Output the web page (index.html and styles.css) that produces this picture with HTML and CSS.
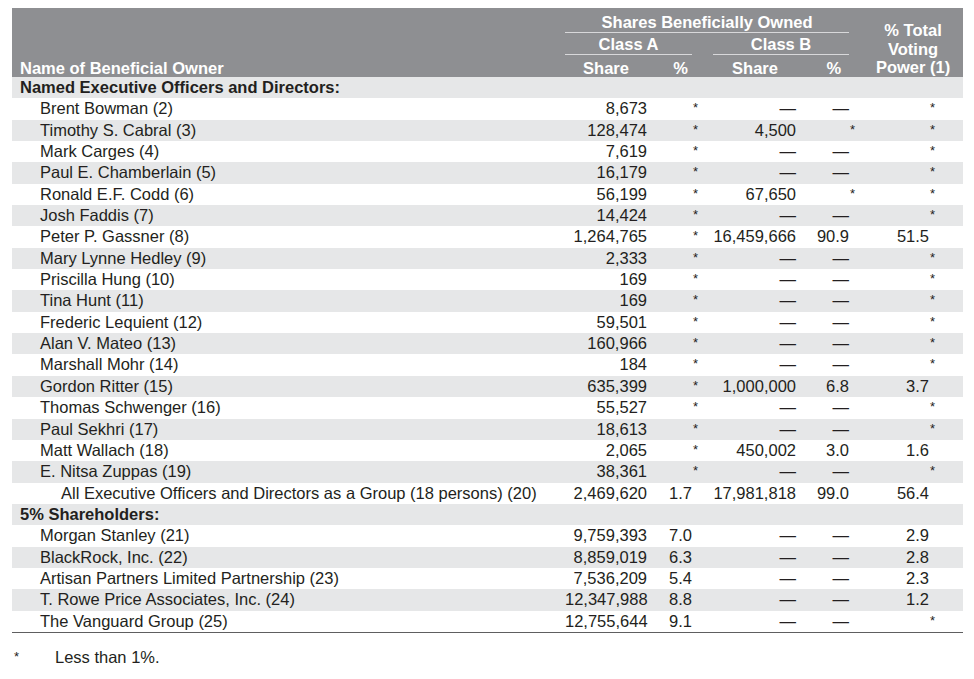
FILE: index.html
```html
<!DOCTYPE html>
<html lang="en">
<head>
<meta charset="utf-8">
<title>Beneficial Ownership</title>
<link rel="stylesheet" href="styles.css">
</head>
<body>
<div class="page">
<table class="own">
<colgroup><col class="c-name"><col class="c-as"><col class="c-ap"><col class="c-bs"><col class="c-bp"><col class="c-t"></colgroup>
<thead>
<tr class="h1"><th rowspan="3" class="h-name">Name of Beneficial Owner</th><th colspan="4" class="h-grp"><div class="rule rule-all">Shares Beneficially Owned</div></th><th rowspan="3" class="h-total">% Total<br>Voting<br>Power (1)</th></tr>
<tr class="h2"><th colspan="2" class="h-grp"><div class="rule rule-a">Class A</div></th><th colspan="2" class="h-grp"><div class="rule rule-b">Class B</div></th></tr>
<tr class="h3"><th class="h-as">Share</th><th class="h-ap">%</th><th class="h-bs">Share</th><th class="h-bp">%</th></tr>
</thead>
<tbody>
<tr><td class="nm sec">Named Executive Officers and Directors:</td><td class="as"></td><td class="ap"></td><td class="bs"></td><td class="bp"></td><td class="t"></td></tr>
<tr><td class="nm">Brent Bowman (2)</td><td class="as">8,673</td><td class="ap"><span class="st">*</span></td><td class="bs">—</td><td class="bp">—</td><td class="t"><span class="st">*</span></td></tr>
<tr><td class="nm">Timothy S. Cabral (3)</td><td class="as">128,474</td><td class="ap"><span class="st">*</span></td><td class="bs">4,500</td><td class="bp"><span class="st">*</span></td><td class="t"><span class="st">*</span></td></tr>
<tr><td class="nm">Mark Carges (4)</td><td class="as">7,619</td><td class="ap"><span class="st">*</span></td><td class="bs">—</td><td class="bp">—</td><td class="t"><span class="st">*</span></td></tr>
<tr><td class="nm">Paul E. Chamberlain (5)</td><td class="as">16,179</td><td class="ap"><span class="st">*</span></td><td class="bs">—</td><td class="bp">—</td><td class="t"><span class="st">*</span></td></tr>
<tr><td class="nm">Ronald E.F. Codd (6)</td><td class="as">56,199</td><td class="ap"><span class="st">*</span></td><td class="bs">67,650</td><td class="bp"><span class="st">*</span></td><td class="t"><span class="st">*</span></td></tr>
<tr><td class="nm">Josh Faddis (7)</td><td class="as">14,424</td><td class="ap"><span class="st">*</span></td><td class="bs">—</td><td class="bp">—</td><td class="t"><span class="st">*</span></td></tr>
<tr><td class="nm">Peter P. Gassner (8)</td><td class="as">1,264,765</td><td class="ap"><span class="st">*</span></td><td class="bs">16,459,666</td><td class="bp">90.9</td><td class="t">51.5</td></tr>
<tr><td class="nm">Mary Lynne Hedley (9)</td><td class="as">2,333</td><td class="ap"><span class="st">*</span></td><td class="bs">—</td><td class="bp">—</td><td class="t"><span class="st">*</span></td></tr>
<tr><td class="nm">Priscilla Hung (10)</td><td class="as">169</td><td class="ap"><span class="st">*</span></td><td class="bs">—</td><td class="bp">—</td><td class="t"><span class="st">*</span></td></tr>
<tr><td class="nm">Tina Hunt (11)</td><td class="as">169</td><td class="ap"><span class="st">*</span></td><td class="bs">—</td><td class="bp">—</td><td class="t"><span class="st">*</span></td></tr>
<tr><td class="nm">Frederic Lequient (12)</td><td class="as">59,501</td><td class="ap"><span class="st">*</span></td><td class="bs">—</td><td class="bp">—</td><td class="t"><span class="st">*</span></td></tr>
<tr><td class="nm">Alan V. Mateo (13)</td><td class="as">160,966</td><td class="ap"><span class="st">*</span></td><td class="bs">—</td><td class="bp">—</td><td class="t"><span class="st">*</span></td></tr>
<tr><td class="nm">Marshall Mohr (14)</td><td class="as">184</td><td class="ap"><span class="st">*</span></td><td class="bs">—</td><td class="bp">—</td><td class="t"><span class="st">*</span></td></tr>
<tr><td class="nm">Gordon Ritter (15)</td><td class="as">635,399</td><td class="ap"><span class="st">*</span></td><td class="bs">1,000,000</td><td class="bp">6.8</td><td class="t">3.7</td></tr>
<tr><td class="nm">Thomas Schwenger (16)</td><td class="as">55,527</td><td class="ap"><span class="st">*</span></td><td class="bs">—</td><td class="bp">—</td><td class="t"><span class="st">*</span></td></tr>
<tr><td class="nm">Paul Sekhri (17)</td><td class="as">18,613</td><td class="ap"><span class="st">*</span></td><td class="bs">—</td><td class="bp">—</td><td class="t"><span class="st">*</span></td></tr>
<tr><td class="nm">Matt Wallach (18)</td><td class="as">2,065</td><td class="ap"><span class="st">*</span></td><td class="bs">450,002</td><td class="bp">3.0</td><td class="t">1.6</td></tr>
<tr><td class="nm">E. Nitsa Zuppas (19)</td><td class="as">38,361</td><td class="ap"><span class="st">*</span></td><td class="bs">—</td><td class="bp">—</td><td class="t"><span class="st">*</span></td></tr>
<tr><td class="nm grp">All Executive Officers and Directors as a Group (18 persons) (20)</td><td class="as">2,469,620</td><td class="ap">1.7</td><td class="bs">17,981,818</td><td class="bp">99.0</td><td class="t">56.4</td></tr>
<tr><td class="nm sec">5% Shareholders:</td><td class="as"></td><td class="ap"></td><td class="bs"></td><td class="bp"></td><td class="t"></td></tr>
<tr><td class="nm">Morgan Stanley (21)</td><td class="as">9,759,393</td><td class="ap">7.0</td><td class="bs">—</td><td class="bp">—</td><td class="t">2.9</td></tr>
<tr><td class="nm">BlackRock, Inc. (22)</td><td class="as">8,859,019</td><td class="ap">6.3</td><td class="bs">—</td><td class="bp">—</td><td class="t">2.8</td></tr>
<tr><td class="nm">Artisan Partners Limited Partnership (23)</td><td class="as">7,536,209</td><td class="ap">5.4</td><td class="bs">—</td><td class="bp">—</td><td class="t">2.3</td></tr>
<tr><td class="nm">T. Rowe Price Associates, Inc. (24)</td><td class="as">12,347,988</td><td class="ap">8.8</td><td class="bs">—</td><td class="bp">—</td><td class="t">1.2</td></tr>
<tr><td class="nm">The Vanguard Group (25)</td><td class="as">12,755,644</td><td class="ap">9.1</td><td class="bs">—</td><td class="bp">—</td><td class="t"><span class="st">*</span></td></tr>
</tbody>
</table>
<div class="note"><span class="note-mark">*</span><span class="note-text">Less than 1%.</span></div>
</div>
</body>
</html>
```
FILE: styles.css
```css
html, body {
  margin: 0;
  padding: 0;
  background: #ffffff;
}
body {
  font-family: "Liberation Sans", Arial, sans-serif;
  font-size: 16.5px;
  color: #231f20;
}
.page {
  padding: 8px 11px 0 12px;
}
.own {
  width: 951px;
  table-layout: fixed;
  border-collapse: collapse;
  border-spacing: 0;
  border-bottom: 1.5px solid #5e5e60;
}
.c-name { width: 553px; }
.c-as { width: 87px; }
.c-ap { width: 48px; }
.c-bs { width: 100px; }
.c-bp { width: 53px; }
.c-t { width: 110px; }

.own thead {
  background: #8e8f92;
  color: #ffffff;
}
.own th {
  padding: 0;
  font-weight: bold;
  text-align: center;
  vertical-align: bottom;
  white-space: nowrap;
}
.h-name {
  text-align: left !important;
  padding-left: 8px !important;
  line-height: 18px;
}
.h-total {
  padding-left: 10px !important;
  line-height: 18.7px;
}
.h1 .h-grp {
  padding-top: 5px;
}
.h2 .h-grp {
  padding-top: 2px;
}
.rule {
  line-height: 19px;
  border-bottom: 1px solid #d8d8da;
}
.rule-all { margin-right: 4px; }
.rule-a { margin-right: 8px; }
.rule-b { margin-left: 13px; margin-right: 4px; }
.h3 th {
  padding-top: 4px;
  line-height: 18px;
}
.own .h-as { padding-right: 5px; }
.own .h-ap { text-align: right; padding-right: 12px; }
.own .h-bs { padding-left: 10px; }
.own .h-bp { text-align: right; padding-right: 12px; }

.own td {
  padding: 0;
  line-height: 21.35px;
  height: 21.35px;
  text-align: right;
  white-space: nowrap;
}
.own tbody tr:nth-child(odd) {
  background: #e6e7e8;
}
.own td.nm {
  text-align: left;
  padding-left: 28px;
}
.own td.sec {
  padding-left: 8px;
  font-weight: bold;
}
.own td.grp {
  padding-left: 49px;
}
.own td.as { padding-right: 5px; }
.own td.ap { padding-right: 8px; }
.own td.bs { padding-right: 4px; }
.own td.bp { padding-right: 4px; }
.own td.t { padding-right: 34px; }
.st {
  font-size: 13px;
  line-height: 10px;
  vertical-align: 2px;
  margin-right: -6px;
}
.note {
  display: flex;
  margin-top: 15px;
  line-height: 19px;
}
.note-mark {
  width: 41px;
  padding-left: 2px;
  font-size: 13px;
  line-height: 17px;
}
.note-text {
  flex: 0 0 auto;
}
```
